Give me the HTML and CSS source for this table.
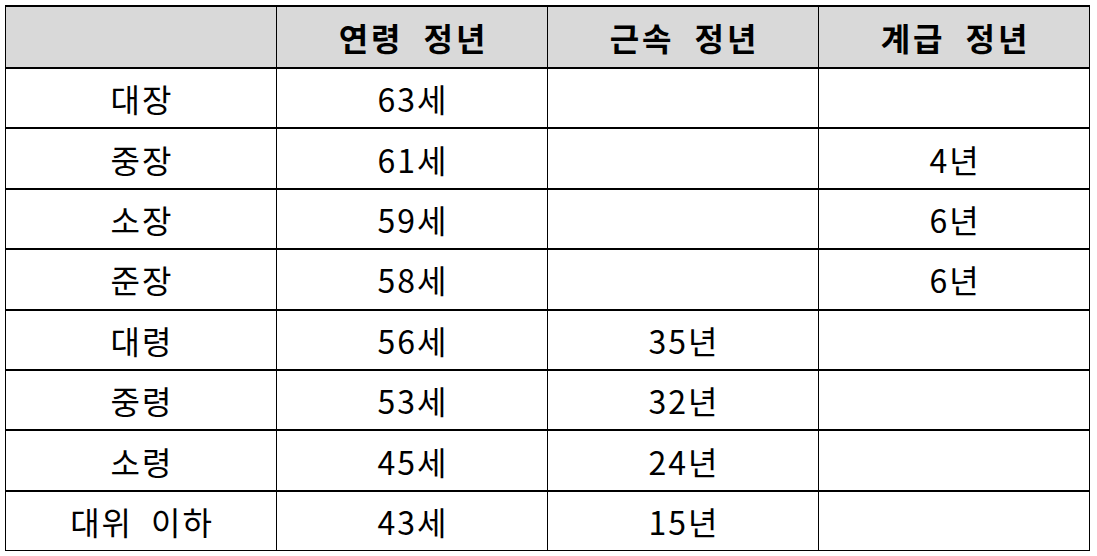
FILE: index.html
```html
<!DOCTYPE html>
<html lang="ko">
<head>
<meta charset="utf-8">
<link rel="stylesheet" href="styles.css">
</head>
<body>
<table class="grid">
  <colgroup><col class="c"><col class="c"><col class="c"><col class="c"></colgroup>
  <thead>
    <tr class="head"><th></th><th>연령 정년</th><th>근속 정년</th><th>계급 정년</th></tr>
  </thead>
  <tbody>
    <tr><td>대장</td><td>63세</td><td></td><td></td></tr>
    <tr><td>중장</td><td>61세</td><td></td><td>4년</td></tr>
    <tr><td>소장</td><td>59세</td><td></td><td>6년</td></tr>
    <tr><td>준장</td><td>58세</td><td></td><td>6년</td></tr>
    <tr><td>대령</td><td>56세</td><td>35년</td><td></td></tr>
    <tr><td>중령</td><td>53세</td><td>32년</td><td></td></tr>
    <tr><td>소령</td><td>45세</td><td>24년</td><td></td></tr>
    <tr><td>대위 이하</td><td>43세</td><td>15년</td><td></td></tr>
  </tbody>
</table>
</body>
</html>
```
FILE: styles.css
```css
html, body {
  margin: 0;
  padding: 0;
  background: #ffffff;
}
body {
  padding: 5px 0 0 5px;
  font-family: "Noto Sans CJK KR", "Noto Sans", sans-serif;
  color: #000;
}
.grid {
  border-collapse: collapse;
  table-layout: fixed;
  width: 1085px;
  border-bottom: 1px solid #000;
}
.grid .c { width: 271px; }
.grid th, .grid td {
  border-top: 2px solid #000;
  border-left: 1px solid #000;
  border-right: 1px solid #000;
  padding: 0 0 0 2px;
  text-align: center;
  vertical-align: middle;
  font-size: 32px;
  line-height: 1;
  letter-spacing: 2px;
}
.grid th {
  height: 60px;
  background: #d9d9d9;
  font-weight: 700;
  letter-spacing: 3px;
  padding-left: 3px;
  word-spacing: 8px;
}
.grid td {
  height: 58.4px;
  font-weight: 400;
  word-spacing: 7px;
}
```
